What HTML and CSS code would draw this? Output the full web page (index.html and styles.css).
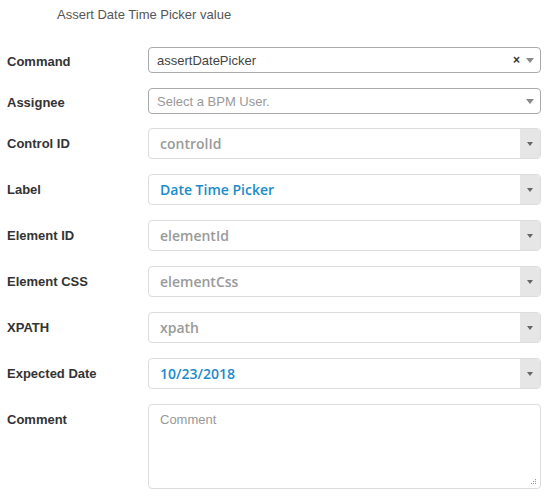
FILE: index.html
```html
<!DOCTYPE html>
<html>
<head>
<meta charset="utf-8">
<link rel="stylesheet" href="styles.css">
</head>
<body>
<div class="panel">
  <div class="title">Assert Date Time Picker value</div>
  <div class="form">
    <div class="row row-sm">
      <div class="label">Command</div>
      <div class="select2">
        <span class="s2-text">assertDatePicker</span>
        <span class="s2-clear">×</span>
        <span class="s2-caret"></span>
      </div>
    </div>
    <div class="row row-sm row-assignee">
      <div class="label">Assignee</div>
      <div class="select2">
        <span class="s2-text s2-placeholder">Select a BPM User.</span>
        <span class="s2-caret"></span>
      </div>
    </div>
    <div class="row">
      <div class="label">Control ID</div>
      <div class="combo"><span class="combo-text muted">controlId</span><span class="combo-btn"><span class="caret"></span></span></div>
    </div>
    <div class="row">
      <div class="label">Label</div>
      <div class="combo"><span class="combo-text value">Date Time Picker</span><span class="combo-btn"><span class="caret"></span></span></div>
    </div>
    <div class="row">
      <div class="label">Element ID</div>
      <div class="combo"><span class="combo-text muted">elementId</span><span class="combo-btn"><span class="caret"></span></span></div>
    </div>
    <div class="row">
      <div class="label">Element CSS</div>
      <div class="combo"><span class="combo-text muted">elementCss</span><span class="combo-btn"><span class="caret"></span></span></div>
    </div>
    <div class="row">
      <div class="label">XPATH</div>
      <div class="combo"><span class="combo-text muted">xpath</span><span class="combo-btn"><span class="caret"></span></span></div>
    </div>
    <div class="row">
      <div class="label">Expected Date</div>
      <div class="combo"><span class="combo-text value">10/23/2018</span><span class="combo-btn"><span class="caret"></span></span></div>
    </div>
    <div class="row row-top">
      <div class="label">Comment</div>
      <div class="textarea-wrap">
        <textarea class="comment" placeholder="Comment"></textarea>
        <svg class="grip" width="6" height="6" viewBox="0 0 6 6"><rect x="4" y="0" width="1" height="1" fill="#999"/><rect x="4" y="2" width="1" height="1" fill="#999"/><rect x="2" y="2" width="1" height="1" fill="#999"/><rect x="4" y="4" width="1" height="1" fill="#999"/><rect x="2" y="4" width="1" height="1" fill="#999"/><rect x="0" y="4" width="1" height="1" fill="#999"/></svg>
      </div>
    </div>
  </div>
</div>
</body>
</html>
```
FILE: styles.css
```css
* { box-sizing: border-box; }
html, body { margin: 0; padding: 0; background: #fff; }
body { font-family: "Liberation Sans", Arial, sans-serif; color: #333; }

.panel { width: 550px; }

.title {
  height: 47px;
  padding: 7px 0 0 57px;
  font-size: 13px;
  line-height: 16px;
  color: #555;
}

.form { display: flex; flex-direction: column; }

.row {
  display: flex;
  align-items: center;
  height: 31px;
  margin-bottom: 15px;
}
.row-sm { height: 26px; }
.row-sm .label { padding-top: 2px; }
.row-assignee { margin-bottom: 14px; }
.row-top { align-items: flex-start; height: auto; }

.label {
  width: 148px;
  padding-left: 7px;
  font-size: 13px;
  font-weight: bold;
  color: #333;
}
.row-top .label { line-height: 31px; }

.select2 {
  width: 393px;
  height: 26px;
  border: 1px solid #aaa;
  border-radius: 4px;
  display: flex;
  align-items: center;
  padding: 0 6px 0 8px;
  font-size: 13px;
}
.s2-text { flex: 1; color: #444; }
.s2-placeholder { color: #999; }
.s2-clear {
  font-size: 12px;
  font-weight: bold;
  color: #333;
  margin-right: 6px;
  line-height: 1;
}
.s2-caret {
  width: 0; height: 0;
  border-left: 4px solid transparent;
  border-right: 4px solid transparent;
  border-top: 5px solid #888;
}

.combo {
  width: 393px;
  height: 31px;
  border: 1px solid #ddd;
  border-radius: 4px;
  display: flex;
  overflow: hidden;
}
.combo-text {
  flex: 1;
  padding-left: 11px;
  font-family: "Open Sans", sans-serif;
  font-weight: 600;
  font-size: 14px;
  line-height: 29px;
}
.muted { color: #9a9a9a; }
.value { color: #1b8bc9; }
.combo-btn {
  width: 20px;
  background: #e6e6e6;
  display: flex;
  align-items: center;
  justify-content: center;
}
.caret {
  width: 0; height: 0;
  border-left: 3.5px solid transparent;
  border-right: 3.5px solid transparent;
  border-top: 4px solid #666;
}

.textarea-wrap { position: relative; width: 393px; height: 85px; }
.comment {
  display: block;
  width: 393px;
  height: 85px;
  border: 1px solid #ddd;
  border-radius: 4px;
  padding: 7px 11px;
  font-family: "Liberation Sans", Arial, sans-serif;
  font-size: 13px;
  resize: none;
  outline: none;
}
.comment::placeholder { color: #999; }
.grip { position: absolute; right: 4px; bottom: 4px; }
```
